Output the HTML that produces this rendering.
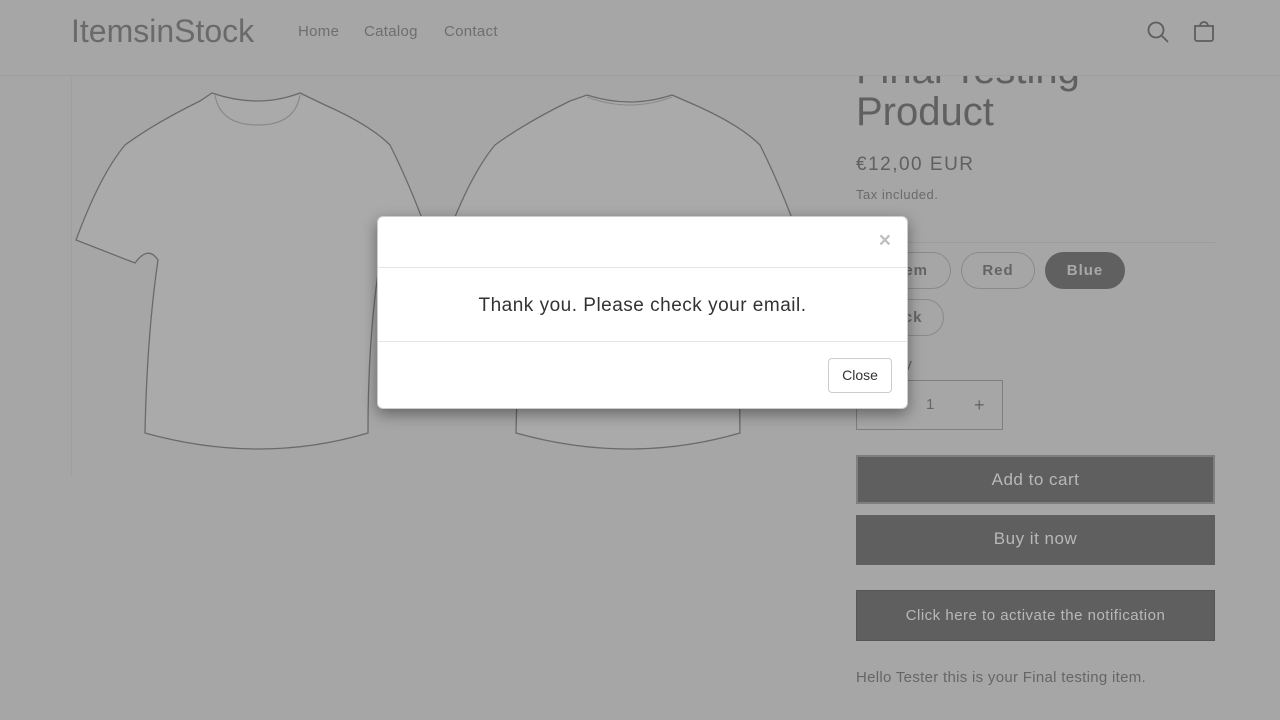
<!DOCTYPE html>
<html><head><meta charset="utf-8"><style>
*{margin:0;padding:0;box-sizing:border-box}
body{width:1280px;height:720px;overflow:hidden;background:#a6a6a6;font-family:"Liberation Sans",sans-serif;position:relative;color:#5e5e5e}
.hdr{position:absolute;left:0;top:0;width:1280px;height:76px;border-bottom:1px solid #9e9e9e;background:#a6a6a6;z-index:2}
.logo{position:absolute;left:71px;top:13px;font-size:32px;color:#6a6a6a;z-index:3}
.nav{position:absolute;top:23px;font-size:15px;color:#6e6e6e;letter-spacing:.3px;z-index:3}
.abs{position:absolute}
.pill{position:absolute;height:37px;border:1px solid #8a8a8a;border-radius:19px;font-size:15px;font-weight:bold;letter-spacing:1px;color:#646464;text-align:center;line-height:35px}
.btn{position:absolute;left:856px;width:359px;background:#666;color:#b8b8b8;text-align:center;font-size:17px;letter-spacing:.5px}
.modal{position:absolute;left:377px;top:216px;width:531px;height:193px;background:#fff;border-radius:6px;box-shadow:0 5px 15px rgba(0,0,0,.4);border:1px solid rgba(0,0,0,.2);z-index:5}
</style></head><body>
<div class="hdr"></div>
<div class="logo">ItemsinStock</div>
<div class="nav" style="left:298px">Home</div>
<div class="nav" style="left:364px">Catalog</div>
<div class="nav" style="left:444px">Contact</div>
<svg class="abs" style="left:1146px;top:20px;z-index:3" width="24" height="24" viewBox="0 0 24 24" fill="none" stroke="#5e5e5e" stroke-width="1.8"><circle cx="10" cy="10" r="7.5"/><path d="M15.5 15.5L22 22"/></svg>
<svg class="abs" style="left:1192px;top:19px;z-index:3" width="24" height="24" viewBox="0 0 24 24" fill="none" stroke="#5e5e5e" stroke-width="1.8"><path d="M3 7h18v13a2 2 0 0 1-2 2H5a2 2 0 0 1-2-2z"/><path d="M8 7a4 4 0 0 1 8 0"/></svg>
<div class="abs" style="left:71px;top:77px;width:1px;height:400px;background:#9f9f9f"></div>
<svg class="abs" style="left:70px;top:85px" width="740" height="380" viewBox="0 0 740 380">
<g fill="#aaaaaa" stroke="#6a6a6a" stroke-width="1.3">
<path d="M142 8 Q188 24 230 8 L255 20 Q300 40 320 60 Q345 110 365 170 L340 180 Q325 162 310 175 Q298 250 298 348 Q190 380 75 348 Q77 250 88 175 Q78 160 65 178 L6 155 Q30 90 55 60 Q85 38 130 16 Z"/>
<path d="M517 10 Q560 24 602 10 L625 20 Q670 40 690 60 Q715 110 735 170 L710 180 Q695 162 680 175 Q668 250 670 348 Q560 380 446 348 Q448 250 458 175 Q448 160 435 178 L376 155 Q400 90 425 60 Q455 38 500 16 Z"/>
</g>
<path d="M145 10 Q150 40 188 40 Q225 40 230 10" fill="none" stroke="#8a8a8a" stroke-width="1.2"/>
<path d="M517 12 Q560 28 602 12" fill="none" stroke="#8a8a8a"/>
</svg>
<div class="abs" style="left:856px;top:48px;font-size:40px;color:#606060">Final Testing</div>
<div class="abs" style="left:856px;top:90px;font-size:40px;color:#606060">Product</div>
<div class="abs" style="left:856px;top:154px;font-size:19px;letter-spacing:1.5px;color:#606060">€12,00 EUR</div>
<div class="abs" style="left:856px;top:187px;font-size:13px;letter-spacing:.5px;color:#6a6a6a">Tax included.</div>
<div class="abs" style="left:856px;top:242px;width:359px;height:1px;background:#9c9c9c"></div>
<div class="pill" style="left:820px;top:252px;width:131px;text-align:right;padding-right:22px">Item</div>
<div class="pill" style="left:961px;top:252px;width:74px">Red</div>
<div class="pill" style="left:1045px;top:252px;width:80px;background:#606060;color:#a8a8a8;border-color:#606060">Blue</div>
<div class="pill" style="left:856px;top:299px;width:88px">Black</div>
<div class="abs" style="left:856px;top:356px;font-size:15px;color:#606060">Quantity</div>
<div class="abs" style="left:856px;top:380px;width:147px;height:50px;border:1px solid #7e7e7e;font-size:15px;color:#666"><span class="abs" style="left:69px;top:15px">1</span><span class="abs" style="left:117px;top:14px;font-size:18px">+</span></div>
<div class="btn" style="top:455px;height:49px;line-height:45px;border:2px solid #7e7e7e;background:#5f5f5f">Add to cart</div>
<div class="btn" style="top:515px;height:50px;line-height:48px;background:#5f5f5f">Buy it now</div>
<div class="btn" style="top:590px;height:51px;line-height:50px;font-size:15px;border:1px solid #555;background:#5f5f5f">Click here to activate the notification</div>
<div class="abs" style="left:856px;top:669px;font-size:15px;letter-spacing:.3px;color:#666">Hello Tester this is your Final testing item.</div>
<div class="modal">
<div class="abs" style="right:16px;top:12px;font-size:21px;font-weight:bold;color:#c0c0c0">×</div>
<div class="abs" style="left:0;top:50px;width:529px;height:1px;background:#e5e5e5"></div>
<div class="abs" style="left:0;top:78px;width:529px;text-align:center;font-size:19px;letter-spacing:.5px;color:#333">Thank you. Please check your email.</div>
<div class="abs" style="left:0;top:124px;width:529px;height:1px;background:#e5e5e5"></div>
<div class="abs" style="left:450px;top:141px;width:64px;height:35px;border:1px solid #ccc;border-radius:4px;font-size:14px;color:#333;text-align:center;line-height:33px">Close</div>
</div>
</body></html>
